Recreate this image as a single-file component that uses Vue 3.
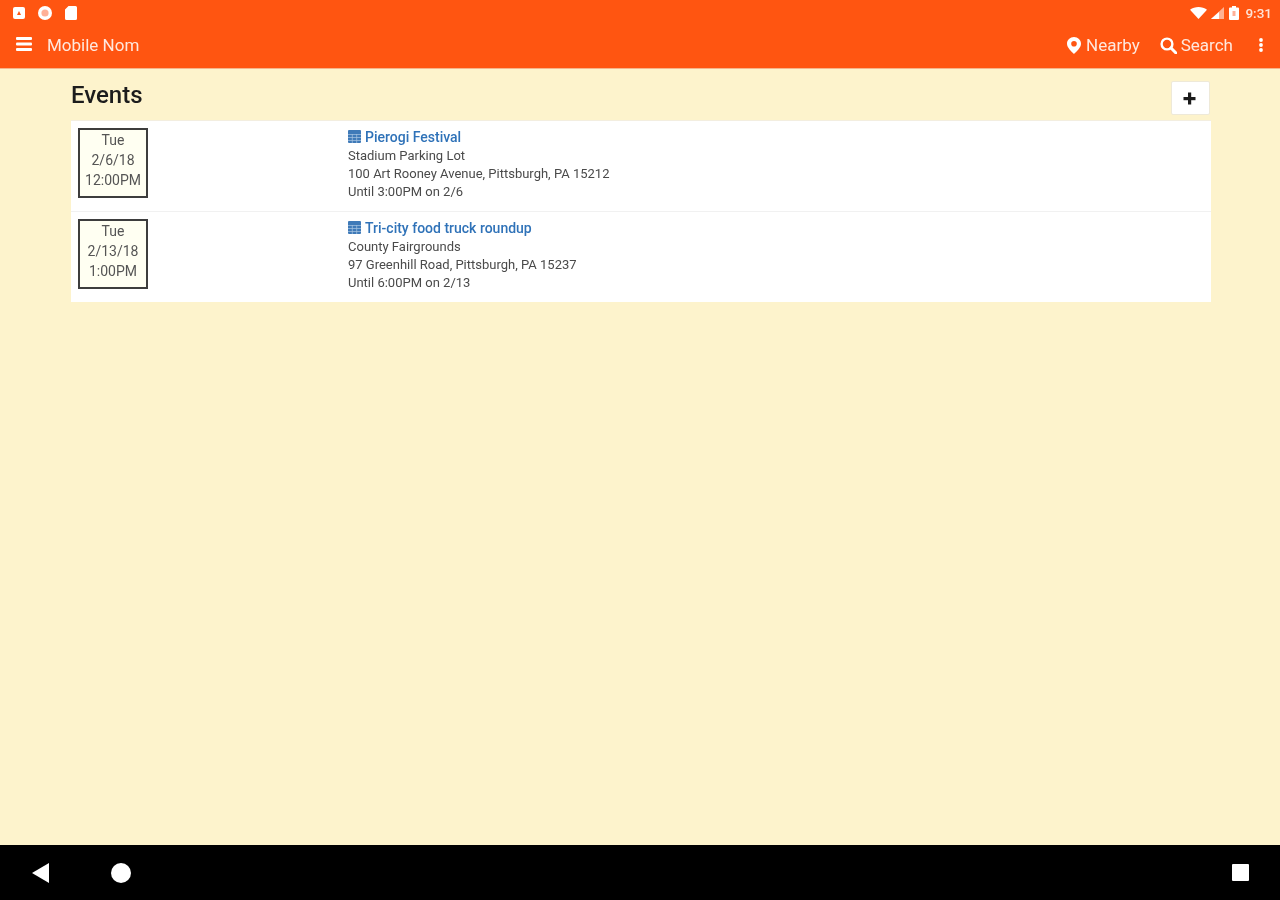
<script setup>
const events = [
  { day: 'Tue', date: '2/6/18', time: '12:00PM', title: 'Pierogi Festival', place: 'Stadium Parking Lot', address: '100 Art Rooney Avenue, Pittsburgh, PA 15212', until: 'Until 3:00PM on 2/6' },
  { day: 'Tue', date: '2/13/18', time: '1:00PM', title: 'Tri-city food truck roundup', place: 'County Fairgrounds', address: '97 Greenhill Road, Pittsburgh, PA 15237', until: 'Until 6:00PM on 2/13' },
]
</script>

<template>
  <div class="screen">
    <header class="appbar">
      <div class="status">
        <div class="status-group">
          <svg width="12" height="12" viewBox="0 0 12 12"><rect x="0" y="0" width="12" height="12" rx="2" fill="#fff" /><path d="M4 8 L6 4 L8 8 Z" fill="#FF5511" /></svg>
          <svg width="14" height="14" viewBox="0 0 14 14"><circle cx="7" cy="7" r="7" fill="#fff" /><circle cx="7" cy="7" r="3.6" fill="#FFB097" /></svg>
          <svg width="12" height="14" viewBox="0 0 12 14"><path d="M3.5 0 H10.5 A1.5 1.5 0 0 1 12 1.5 V12.5 A1.5 1.5 0 0 1 10.5 14 H1.5 A1.5 1.5 0 0 1 0 12.5 V3.5 Z" fill="#fff" /></svg>
        </div>
        <div class="status-group right">
          <svg width="17" height="12" viewBox="0 0 17 12"><path d="M0 2.8 C4.8 -0.9 12.2 -0.9 17 2.8 L8.5 12 Z" fill="#fff" /></svg>
          <svg width="13" height="12" viewBox="0 0 13 12"><path d="M13 0 V12 H0 Z" fill="#fff" opacity=".55" /><path d="M8 5 V12 H0 Z" fill="#fff" /></svg>
          <svg class="battery" width="10" height="14" viewBox="0 0 10 14"><path d="M3 0 H7 V1.5 H9 A1 1 0 0 1 10 2.5 V13 A1 1 0 0 1 9 14 H1 A1 1 0 0 1 0 13 V2.5 A1 1 0 0 1 1 1.5 H3 Z" fill="#fff" /><rect x="3.5" y="5" width="3" height="5" fill="#FFB097" /></svg>
          <span class="clock">9:31</span>
        </div>
      </div>
      <div class="toolbar">
        <svg class="menu" width="16" height="14" viewBox="0 0 16 14" fill="#fff"><rect y="0" width="16" height="3" rx="1" /><rect y="5.5" width="16" height="3" rx="1" /><rect y="11" width="16" height="3" rx="1" /></svg>
        <span class="brand">Mobile Nom</span>
        <span class="action nearby">
          <svg width="14" height="17" viewBox="0 0 14 17"><path fill-rule="evenodd" d="M7 0 C3.1 0 0 3 0 6.7 C0 10.6 4.6 14.4 7 17 C9.4 14.4 14 10.6 14 6.7 C14 3 10.9 0 7 0 Z M7 4 A2.8 2.8 0 1 1 7 9.6 A2.8 2.8 0 1 1 7 4 Z" fill="#fff" /></svg>
          Nearby
        </span>
        <span class="action search">
          <svg width="17" height="17" viewBox="0 0 17 17" fill="none" stroke="#fff"><circle cx="7" cy="7" r="5.4" stroke-width="2.4" /><path d="M11 11 L16 16" stroke-width="3" stroke-linecap="round" /></svg>
          Search
        </span>
        <svg class="more" width="4" height="14" viewBox="0 0 4 14" fill="#fff"><circle cx="2" cy="2" r="1.9" /><circle cx="2" cy="7" r="1.9" /><circle cx="2" cy="12" r="1.9" /></svg>
      </div>
    </header>

    <main class="content">
      <div class="page">
        <div class="heading">
          <h1>Events</h1>
          <button class="add" type="button">
            <svg width="13" height="13" viewBox="0 0 13 13" fill="#1b1b1b"><rect x="5" y="0.5" width="3.2" height="12" /><rect x="0.5" y="5" width="12" height="3.2" /></svg>
          </button>
        </div>
        <ul class="events">
          <li v-for="event in events" :key="event.title" class="event">
            <div class="date-col">
              <div class="date-box">
                <div>{{ event.day }}</div>
                <div>{{ event.date }}</div>
                <div>{{ event.time }}</div>
              </div>
            </div>
            <div class="details">
              <div class="title">
                <svg width="13" height="14" viewBox="0 0 13 14"><rect y="1" width="13" height="13" rx="1" fill="#3F7AB8" /><path d="M0 5.5 H13 M0 8.5 H13 M0 11.5 H13 M4.3 5 V14 M8.7 5 V14" stroke="#A9C6E3" stroke-width=".7" /></svg>
                <span>{{ event.title }}</span>
              </div>
              <div class="line">{{ event.place }}</div>
              <div class="line">{{ event.address }}</div>
              <div class="line">{{ event.until }}</div>
            </div>
          </li>
        </ul>
      </div>
    </main>

    <footer class="navbar">
      <svg class="back" width="17" height="20" viewBox="0 0 17 20"><path d="M0 10 L17 0 V20 Z" fill="#fff" /></svg>
      <span class="home"></span>
      <span class="recent"></span>
    </footer>
  </div>
</template>

<style scoped>
.screen {
  width: 1280px;
  height: 900px;
  display: flex;
  flex-direction: column;
  background: #fdf3cc;
  font-family: Roboto, "Liberation Sans", sans-serif;
  overflow: hidden;
  filter: blur(0.6px);
}
.appbar {
  height: 69px;
  flex: none;
  background: #ff5511;
  color: #fff;
  box-sizing: border-box;
  border-bottom: 1px solid #f7b48b;
}
.status {
  height: 25px;
  display: flex;
  justify-content: space-between;
  align-items: center;
  padding: 0 8px 0 13px;
}
.status-group {
  display: flex;
  align-items: center;
  gap: 13px;
}
.status-group.right {
  gap: 4px;
}
.battery {
  margin-left: 1px;
}
.clock {
  font-size: 13.5px;
  font-weight: 500;
  margin-left: 2px;
  color: #ffe4d8;
}
.toolbar {
  height: 40px;
  display: flex;
  align-items: center;
  padding: 0 17px 0 16px;
}
.menu {
  margin-top: -3px;
}
.brand {
  margin-left: 15px;
  font-size: 17px;
  color: #ffe8de;
}
.action {
  display: flex;
  align-items: center;
  gap: 5px;
  font-size: 17px;
  color: #ffe8de;
}
.nearby {
  margin-left: auto;
}
.search {
  margin-left: 20px;
  gap: 4px;
}
.more {
  margin-left: 26px;
}
.content {
  flex: 1;
  min-height: 0;
}
.page {
  width: 1140px;
  margin-left: 71px;
}
.heading {
  height: 51px;
  display: flex;
  justify-content: space-between;
  padding-top: 12px;
  box-sizing: border-box;
}
h1 {
  margin: 1px 0 0;
  font-size: 24px;
  font-weight: 500;
  line-height: 26px;
  color: #1c1c1c;
}
.add {
  width: 39px;
  height: 34px;
  padding: 0 2px 0 0;
  margin-right: 1px;
  display: flex;
  align-items: center;
  justify-content: center;
  background: #fff;
  border: 1px solid #eee9d8;
  border-radius: 2px;
}
.events {
  list-style: none;
  margin: 0;
  padding: 0;
  background: #fff;
  border-top: 1px solid #f3eee0;
}
.event {
  height: 90px;
  display: flex;
  box-sizing: border-box;
  padding-top: 7px;
}
.event + .event {
  height: 91px;
  border-top: 1px solid #f1f1f1;
}
.date-col {
  width: 270px;
  padding-left: 7px;
  flex: none;
}
.date-box {
  width: 70px;
  height: 70px;
  box-sizing: border-box;
  border: 2px solid #3d3d3d;
  background: #fffff2;
  text-align: center;
  font-size: 14px;
  line-height: 20px;
  color: #555;
}
.details {
  color: #4a4a4a;
  font-size: 13px;
  line-height: 18px;
}
.title {
  display: flex;
  align-items: center;
  gap: 4px;
  height: 18px;
  font-size: 14px;
  font-weight: 500;
  color: #2f72b8;
}
.title svg {
  margin-top: -3px;
}
.title + .line {
  margin-top: 1px;
}
.navbar {
  height: 55px;
  flex: none;
  display: flex;
  align-items: center;
  background: #000;
  box-sizing: border-box;
  padding-left: 32px;
  padding-right: 31px;
}
.home {
  width: 20px;
  height: 20px;
  margin-left: 62px;
  border-radius: 50%;
  background: #fff;
}
.recent {
  width: 17px;
  height: 17px;
  margin-left: auto;
  border-radius: 1px;
  background: #fff;
}
</style>
